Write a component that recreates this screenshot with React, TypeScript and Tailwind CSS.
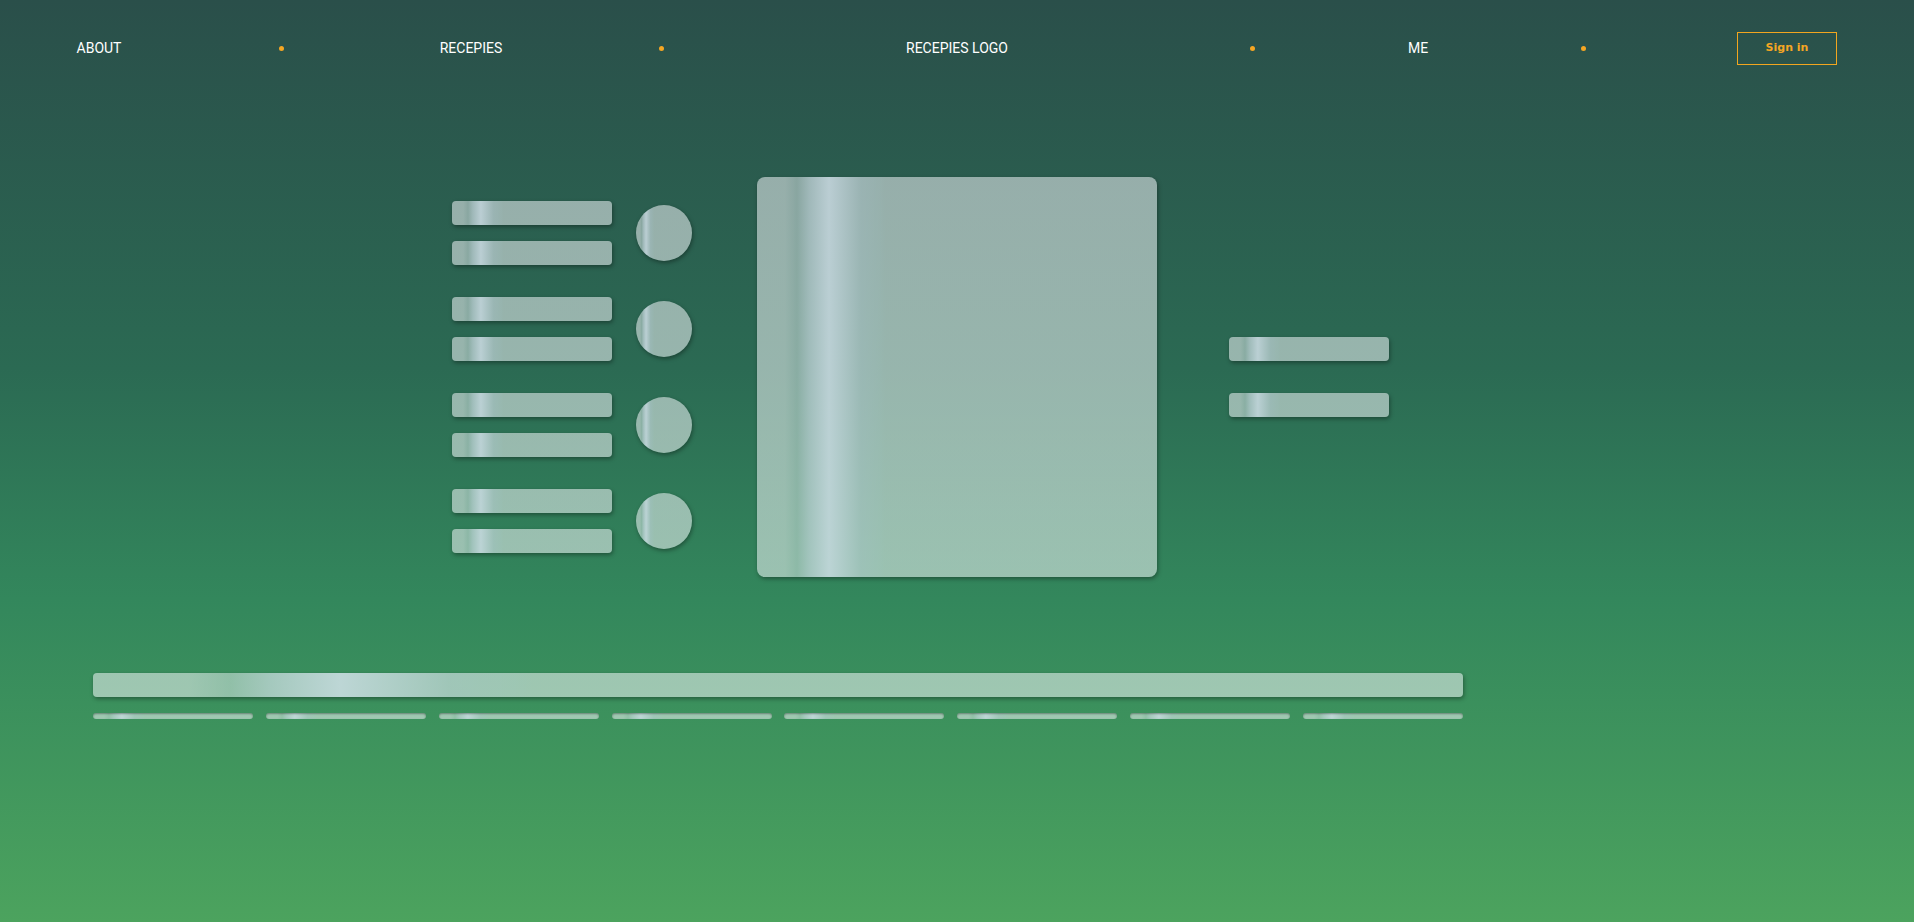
const shine =
  "bg-[linear-gradient(90deg,rgba(250,250,255,0.52)_0%,rgba(250,250,255,0.52)_7%,rgba(240,245,250,0.48)_10%,rgba(220,231,240,0.66)_13%,rgba(218,230,240,0.82)_18%,rgba(222,232,240,0.62)_26%,rgba(240,245,250,0.55)_31%,rgba(250,250,255,0.52)_32%,rgba(250,250,255,0.52)_100%)]";

const lift = "shadow-[1px_2px_4px_rgba(0,0,0,0.35)]";

const navItems = [
  { kind: "link", label: "ABOUT", w: "w-[182px]" },
  { kind: "dot", w: "w-[182px]" },
  { kind: "link", label: "RECEPIES", w: "w-[198px]" },
  { kind: "dot", w: "w-[182px]" },
  { kind: "link", label: "RECEPIES LOGO", w: "w-[410px]" },
  { kind: "dot", w: "w-[180px]" },
  { kind: "link", label: "ME", w: "w-[152px]" },
  { kind: "dot", w: "w-[178px]" },
];

const Bar = ({ className = "" }: { className?: string }) => (
  <div className={`h-6 w-40 rounded-[4px] ${shine} ${lift} ${className}`} />
);

const Group = () => (
  <div className="flex items-center gap-6">
    <div className="flex flex-col gap-4">
      <Bar />
      <Bar />
    </div>
    <div className={`h-14 w-14 rounded-full ${shine} ${lift}`} />
  </div>
);

const Nav = () => (
  <nav className="flex h-24 items-center pl-2 font-['Roboto',sans-serif] text-[14px] text-white">
    {navItems.map((item, i) => (
      <div key={i} className={`flex justify-center ${item.w}`}>
        {item.kind === "dot" ? (
          <span className="h-[5px] w-[5px] rounded-full bg-[#f5a623]" />
        ) : (
          <a href="#" className="leading-none">
            {item.label}
          </a>
        )}
      </div>
    ))}
    <div className="flex w-[230px] justify-center">
      <button className="h-[33px] w-[100px] border border-[#f2a61f] pt-px font-['DejaVu_Sans',sans-serif] text-[11px] font-bold text-[#f5a623]">
        Sign in
      </button>
    </div>
  </nav>
);

export default function App() {
  return (
    <div className="min-h-screen w-full bg-[linear-gradient(180deg,#2a4f4a_0%,#2b6a53_40%,#33875c_65%,#4ca35e_100%)]">
      <Nav />

      <section className="mt-[81px] flex items-center pl-[452px]">
        <div className="flex flex-col gap-8">
          <Group />
          <Group />
          <Group />
          <Group />
        </div>
        <div className={`ml-[65px] h-[400px] w-[400px] rounded-lg ${shine} ${lift}`} />
        <div className="ml-[72px] flex flex-col gap-8">
          <Bar />
          <Bar />
        </div>
      </section>

      <section className="mt-24 ml-[93px] w-[1370px]">
        <div className={`h-6 w-full rounded-[4px] ${shine} ${lift}`} />
        <div className="mt-4 flex justify-between">
          {Array.from({ length: 8 }).map((_, i) => (
            <div
              key={i}
              className={`h-[6px] w-40 rounded-full ${shine} shadow-[inset_0_1px_2px_rgba(0,0,0,0.35)]`}
            />
          ))}
        </div>
      </section>
    </div>
  );
}
